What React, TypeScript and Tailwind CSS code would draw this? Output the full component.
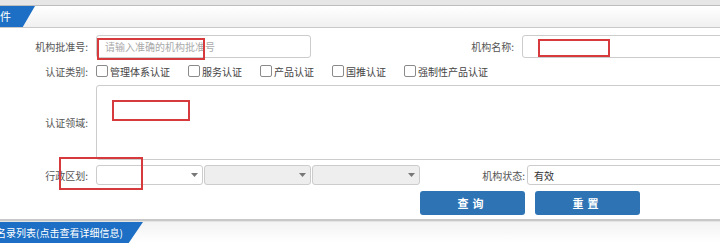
import React from "react";

const CATEGORIES = ["管理体系认证", "服务认证", "产品认证", "国推认证", "强制性产品认证"];

function Arrow() {
  return (
    <svg width="7" height="4" viewBox="0 0 7 4" className="shrink-0">
      <path d="M0 0 L7 0 L3.5 4 Z" fill="#777" />
    </svg>
  );
}

function Select({ disabled }: { disabled?: boolean }) {
  return (
    <div
      className={`h-[20px] flex items-center justify-end pr-[4px] border border-[#cccccc] rounded-[3px] shrink-0 ${
        disabled ? "bg-[#eeeeee]" : "bg-white"
      }`}
    >
      <Arrow />
    </div>
  );
}

function Mark({ className }: { className: string }) {
  // red annotation boxes drawn over the form
  return <div className={`absolute border-2 border-[#d63a3c] pointer-events-none ${className}`} />;
}

export default function App() {
  return (
    <div className="relative w-[720px] h-[244px] overflow-hidden bg-white text-[10px] text-[#555] font-['Noto_Sans_CJK_SC','Microsoft_YaHei',sans-serif]">
      <div className="h-[6px] bg-[#e6e6e6] border-b border-[#bdbdbd]" />
      <div className="h-[22px] flex bg-gradient-to-b from-white to-[#f0f0f0] border-b border-[#c9c9c9]">
        <div className="w-[35px] h-full bg-[#1c6fc4] text-white text-[11px] flex items-center overflow-hidden [clip-path:polygon(0_0,100%_0,65%_100%,0_100%)]">
          <span className="ml-[-11px] whitespace-nowrap">条件</span>
        </div>
      </div>

      {/* row 1 */}
      <div className="mt-[7px] h-[23px] flex items-center">
        <div className="w-[88px] text-right shrink-0">机构批准号:</div>
        <div className="ml-[8px] w-[215px] h-full shrink-0 border border-[#cccccc] rounded-[3px] flex items-center pl-[8px] text-[#aaaaaa]">
          请输入准确的机构批准号
        </div>
        <div className="w-[203px] text-right shrink-0">机构名称:</div>
        <div className="ml-[8px] w-[240px] h-full shrink-0 border border-[#cccccc] rounded-[3px]" />
      </div>

      {/* row 2 */}
      <div className="mt-[4px] h-[18px] flex items-center">
        <div className="w-[88px] text-right shrink-0">认证类别:</div>
        <div className="ml-[8px] flex items-center text-[#444]">
          {CATEGORIES.map((c) => (
            <label key={c} className="flex items-center gap-[2px] mr-[18px] whitespace-nowrap">
              <span className="w-[12px] h-[12px] border border-[#8a8a8a] rounded-[2px] bg-white" />
              {c}
            </label>
          ))}
        </div>
      </div>

      {/* textarea */}
      <div className="mt-[5px] h-[75px] flex items-center">
        <div className="w-[88px] text-right shrink-0">认证领域:</div>
        <div className="ml-[8px] w-[700px] h-full shrink-0 border border-[#cccccc] rounded-[3px]" />
      </div>

      {/* row 4 */}
      <div className="mt-[5px] h-[20px] flex items-center">
        <div className="w-[88px] text-right shrink-0">行政区划:</div>
        <div className="ml-[8px] flex gap-[1px]">
          <div className="w-[107px]">
            <Select />
          </div>
          <div className="w-[107px]">
            <Select disabled />
          </div>
          <div className="w-[108px]">
            <Select disabled />
          </div>
        </div>
        <div className="w-[105px] text-right shrink-0">机构状态:</div>
        <div className="ml-[2px] w-[220px] h-full shrink-0 border border-[#cccccc] rounded-[3px] flex items-center pl-[6px] text-[#333]">
          有效
        </div>
      </div>

      {/* buttons */}
      <div className="mt-[6px] flex gap-[10px] pl-[420px]">
        <button className="w-[105px] h-[24px] bg-[#2e74b5] rounded-[3px] text-white text-[11px] font-bold tracking-[4px]">
          查询
        </button>
        <button className="w-[105px] h-[24px] bg-[#2e74b5] rounded-[3px] text-white text-[11px] font-bold tracking-[4px]">
          重置
        </button>
      </div>

      {/* list header */}
      <div className="mt-[4px] h-[2px] bg-[#c8c8c8]" />
      <div className="h-[22px] flex border-t border-[#e4e4e4] bg-gradient-to-b from-[#f3f3f3] to-white">
        <div className="w-[143px] h-full bg-[#1c6fc4] text-white text-[10px] flex items-center overflow-hidden [clip-path:polygon(0_0,100%_0,90%_100%,0_100%)]">
          <span className="ml-[-4px] whitespace-nowrap">名录列表(点击查看详细信息)</span>
        </div>
      </div>

      <Mark className="left-[97px] top-[38px] w-[108px] h-[22px]" />
      <Mark className="left-[538px] top-[39px] w-[72px] h-[18px]" />
      <Mark className="left-[112px] top-[100px] w-[78px] h-[21px]" />
      <Mark className="left-[59px] top-[157px] w-[84px] h-[33px]" />
    </div>
  );
}
